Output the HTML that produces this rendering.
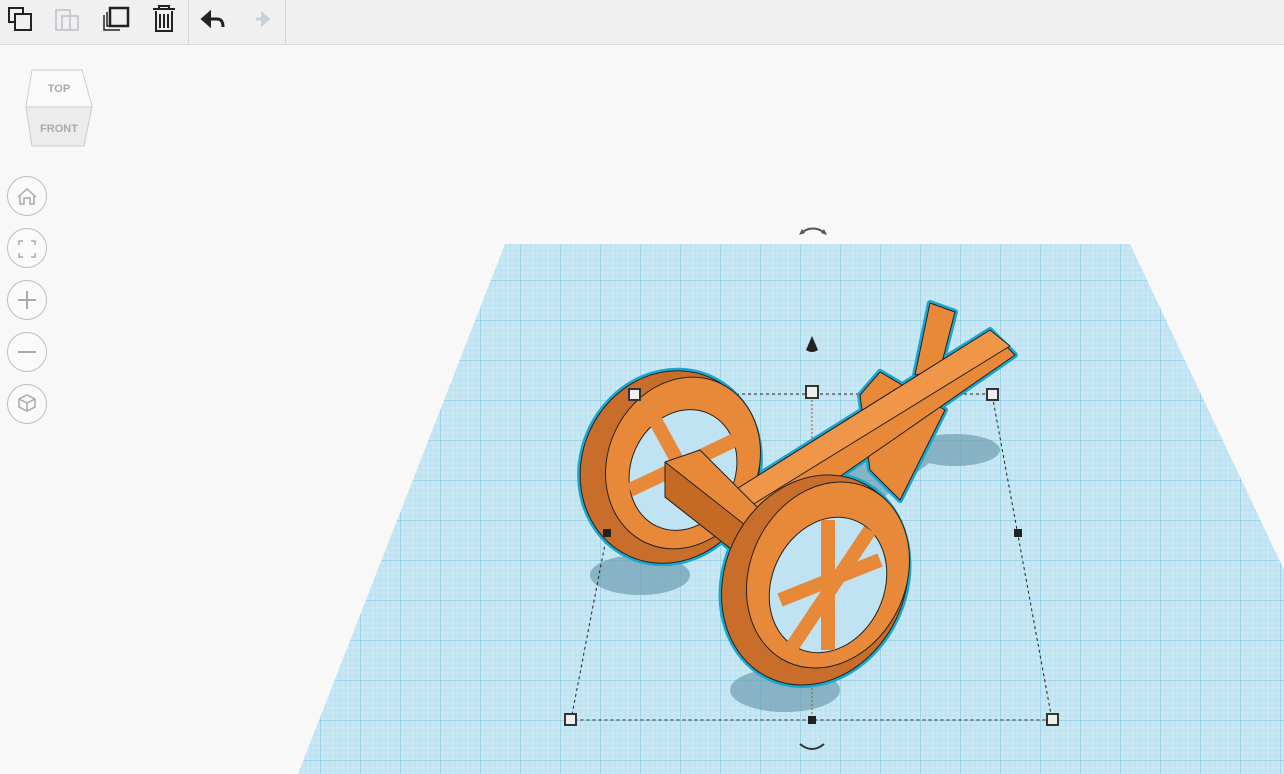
<!DOCTYPE html>
<html><head><meta charset="utf-8"><style>
html,body{margin:0;padding:0;width:1284px;height:774px;overflow:hidden;background:#f8f8f8;font-family:"Liberation Sans",sans-serif}
.tb{position:absolute;left:0;top:0;width:1284px;height:44px;background:#f0f0f1;border-bottom:1px solid #d8d8da}
.sep{position:absolute;top:0;width:1px;height:44px;background:#d6d6d8}
.cb{position:absolute;left:7px;width:38px;height:38px;border:1px solid #bdbdbd;border-radius:50%;background:#fafafa}
</style></head><body>
<svg width="1284" height="774" style="position:absolute;left:0;top:0">
<defs>
<pattern id="g" width="5" height="5" patternUnits="userSpaceOnUse"><path d="M0 0H5M0 0V5" stroke="#a6d6ea" stroke-width="0.6" fill="none"/></pattern>
<pattern id="G" width="40" height="40" patternUnits="userSpaceOnUse"><path d="M0 0H40M0 0V40" stroke="#78bfdd" stroke-width="1" fill="none"/></pattern>
</defs>
<polygon points="505,244 1130,244 1284,570 1284,774 298,774" fill="#c6e7f3"/>
<polygon points="505,244 1130,244 1284,570 1284,774 298,774" fill="url(#g)"/>
<polygon points="505,244 1130,244 1284,570 1284,774 298,774" fill="url(#G)"/>
<g fill="#6d9eb1" opacity=".7">
<ellipse cx="640" cy="575" rx="50" ry="20"/>
<ellipse cx="785" cy="690" rx="55" ry="22"/>
<ellipse cx="955" cy="450" rx="45" ry="16"/>
<polygon points="720,520 900,440 960,440 800,560"/>
</g>
<polygon points="634,394 992,394 1052,720 571,720" fill="none" stroke="#222" stroke-dasharray="3,3"/>
<line x1="812" y1="392" x2="812" y2="720" stroke="#8a5a2a" stroke-dasharray="2,2"/>
<g stroke="#1aa7cf" stroke-width="6" stroke-linejoin="round" fill="#e8893a">
<polygon points="860,395 880,372 945,410 900,500 870,470"/>
<polygon points="930,303 955,312 940,370 915,375"/>
<ellipse cx="670" cy="467" rx="88" ry="98" transform="rotate(25 670 467)"/>
<polygon points="735,490 990,330 1015,355 760,532"/>
<polygon points="665,462 700,450 770,520 745,560 665,497"/>
<ellipse cx="815" cy="580" rx="90" ry="108" transform="rotate(25 815 580)"/>
</g>
<g stroke="#222" stroke-width="1" fill="#e8893a" stroke-linejoin="round">
<polygon points="860,395 880,372 945,410 900,500 870,470"/>
<polygon points="930,303 955,312 940,370 915,375"/>
<ellipse cx="670" cy="467" rx="88" ry="98" transform="rotate(25 670 467)" fill="#c86e2a"/>
<ellipse cx="683" cy="463" rx="75" ry="88" transform="rotate(25 683 463)"/>
<ellipse cx="683" cy="470" rx="52" ry="62" transform="rotate(25 683 470)" fill="#bfe3f2"/>
<path d="M655 420 L710 520 M630 490 L735 440" stroke="#e8893a" stroke-width="14"/>
<polygon points="735,490 990,330 1015,355 760,532"/>
<polygon points="735,490 990,330 1010,346 752,505" fill="#ef9648"/>
<polygon points="665,462 700,450 770,520 745,560 665,497"/>
<polygon points="665,462 665,497 745,560 745,525" fill="#c56a24"/>
<ellipse cx="815" cy="580" rx="90" ry="108" transform="rotate(25 815 580)" fill="#c86e2a"/>
<ellipse cx="828" cy="575" rx="78" ry="96" transform="rotate(25 828 575)"/>
<ellipse cx="828" cy="585" rx="56" ry="70" transform="rotate(25 828 585)" fill="#bfe3f2"/>
<path d="M828 520 L828 650 M780 600 L880 560 M790 650 L870 530" stroke="#e8893a" stroke-width="14"/>
</g>
<g fill="#eee" stroke="#333" stroke-width="2">
<rect x="629" y="389" width="11" height="11"/><rect x="806" y="386" width="12" height="12"/><rect x="987" y="389" width="11" height="11"/>
<rect x="565" y="714" width="11" height="11"/><rect x="1047" y="714" width="11" height="11"/>
</g>
<g fill="#222"><rect x="603" y="529" width="8" height="8"/><rect x="1014" y="529" width="8" height="8"/><rect x="808" y="716" width="8" height="8"/>
<path d="M812 336 L818 350 Q812 354 806 350 Z"/></g>
<path d="M801 233 Q813 224 825 233" stroke="#555" stroke-width="2" fill="none"/><path d="M799 235l3-6 3 4zM827 235l-3-6-3 4z" fill="#555"/>
<path d="M800 744 Q812 754 824 744" stroke="#333" stroke-width="2" fill="none"/>
</svg>
<div class="tb">
<svg width="300" height="44" style="position:absolute;left:0;top:0" fill="none" stroke="#222" stroke-width="2">
<rect x="9" y="8" width="14" height="14"/><rect x="15" y="14" width="16" height="16" fill="#f0f0f1"/>
<g stroke="#c8ccd2"><rect x="56" y="10" width="14" height="20"/><rect x="62" y="16" width="16" height="14"/></g>
<rect x="110" y="8" width="18" height="18" stroke-width="2.5"/><path d="M107 12v14h16M104 15v15h16" stroke-width="1.5"/>
<path d="M153 9h22M159 9v-3h10v3M156 11v20h16v-20M160 14v14M164 14v14M168 14v14" stroke-width="2"/>
<path d="M205 19h12q6 0 6 8" stroke-width="3"/><path d="M210 12l-8 7 8 7z" fill="#222"/>
<path d="M268 19h-12" stroke="#c8d0d8" stroke-width="3"/><path d="M262 13l7 6-7 6z" fill="#c8d0d8" stroke="#c8d0d8"/>
</svg>
<div class="sep" style="left:188px"></div><div class="sep" style="left:285px"></div>
</div>
<svg width="80" height="90" style="position:absolute;left:22px;top:66px">
<polygon points="10,4 60,4 70,40 62,80 10,80 4,40" fill="#fafafa" stroke="#ccc"/>
<polygon points="4,41 70,41 62,80 10,80" fill="#ececec" stroke="#ccc"/>
<text x="37" y="26" font-size="11" font-weight="bold" fill="#aaa" text-anchor="middle" font-family="Liberation Sans">TOP</text>
<text x="37" y="66" font-size="11" font-weight="bold" fill="#aaa" text-anchor="middle" font-family="Liberation Sans">FRONT</text>
</svg>
<div class="cb" style="top:176px"></div><div class="cb" style="top:228px"></div><div class="cb" style="top:280px"></div><div class="cb" style="top:332px"></div><div class="cb" style="top:384px"></div>
<svg width="60" height="260" style="position:absolute;left:0;top:170px" fill="none" stroke="#aaa" stroke-width="1.5">
<path d="M18 27l9-8 9 8M20 25v9h4v-6h6v6h4v-9"/>
<path d="M19 75v-4h4M35 75v-4h-4M19 83v4h4M35 83v4h-4"/>
<path d="M27 121v18M18 130h18" stroke-width="2"/>
<path d="M18 182h18" stroke-width="2"/>
<path d="M27 225l8 4v8l-8 4-8-4v-8zM19 229l8 4 8-4M27 233v8"/>
</svg>
</body></html>
